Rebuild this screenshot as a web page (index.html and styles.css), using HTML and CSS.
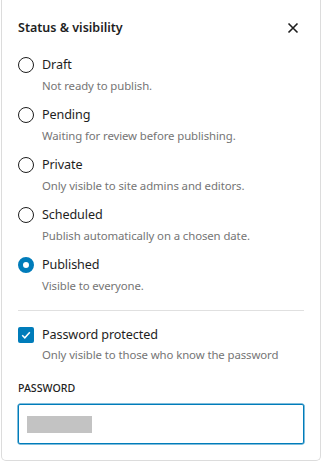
FILE: index.html
```html
<!DOCTYPE html>
<html>
<head>
<meta charset="utf-8">
<link rel="stylesheet" href="styles.css">
</head>
<body>
<div class="panel">
  <div class="header">
    <h2 class="title">Status &amp; visibility</h2>
    <button class="close" aria-label="Close">
      <svg width="12" height="12" viewBox="0 0 12 12"><path d="M1.5 1.5 L10.5 10.5 M10.5 1.5 L1.5 10.5" stroke="#1e1e1e" stroke-width="1.6" fill="none"/></svg>
    </button>
  </div>
  <div class="options">
    <div class="option">
      <div class="row"><span class="radio"></span><span class="label">Draft</span></div>
      <div class="desc">Not ready to publish.</div>
    </div>
    <div class="option">
      <div class="row"><span class="radio"></span><span class="label">Pending</span></div>
      <div class="desc">Waiting for review before publishing.</div>
    </div>
    <div class="option">
      <div class="row"><span class="radio"></span><span class="label">Private</span></div>
      <div class="desc">Only visible to site admins and editors.</div>
    </div>
    <div class="option">
      <div class="row"><span class="radio"></span><span class="label">Scheduled</span></div>
      <div class="desc">Publish automatically on a chosen date.</div>
    </div>
    <div class="option">
      <div class="row"><span class="radio checked"></span><span class="label">Published</span></div>
      <div class="desc">Visible to everyone.</div>
    </div>
  </div>
  <div class="sep"></div>
  <div class="check-opt">
    <div class="row"><span class="checkbox"><svg width="16" height="16" viewBox="0 0 16 16"><path d="M4.2 8.3 L6.8 10.8 L11.8 5.2" stroke="#fff" stroke-width="1.5" fill="none"/></svg></span><span class="label">Password protected</span></div>
    <div class="desc2">Only visible to those who know the password</div>
  </div>
  <div class="field-label">PASSWORD</div>
  <div class="input"><span class="mask"></span></div>
</div>
</body>
</html>
```
FILE: styles.css
```css
* { box-sizing: border-box; }
body {
  margin: 0;
  background: #fff;
  font-family: "Noto Sans", "Open Sans", sans-serif;
  color: #1e1e1e;
}
.panel {
  margin-left: 1px;
  width: 320px;
  border: 1px solid #dcdcdc;
  border-top: none;
  border-radius: 0 0 5px 5px;
  padding: 18px 16px 16px 16px;
  background: #fff;
}
.header {
  display: flex;
  align-items: center;
  justify-content: space-between;
  height: 20px;
}
.title {
  margin: 0;
  font-size: 12.5px;
  font-weight: 600;
  line-height: 20px;
}
.close {
  border: none;
  background: none;
  padding: 0;
  margin-right: 5px;
  width: 12px;
  height: 12px;
  display: flex;
}
.options {
  margin-top: 17px;
  display: flex;
  flex-direction: column;
  gap: 11px;
}
.row {
  display: flex;
  align-items: center;
  gap: 8px;
  height: 20px;
}
.label {
  font-size: 12.6px;
  line-height: 20px;
  letter-spacing: -0.1px;
}
.radio {
  width: 16px;
  height: 16px;
  border: 1.5px solid #1e1e1e;
  border-radius: 50%;
  flex: none;
}
.radio.checked {
  border: 5px solid #007cba;
  background: #fff;
}
.desc, .desc2 {
  margin-top: 3px;
  margin-left: 24px;
  font-size: 11.4px;
  letter-spacing: -0.1px;
  line-height: 16px;
  color: #757575;
}
.desc2 { margin-top: 2px; }
.sep {
  margin-top: 16px;
  height: 1px;
  background: #e0e0e0;
}
.check-opt {
  margin-top: 14px;
}
.checkbox {
  width: 16px;
  height: 16px;
  background: #007cba;
  border-radius: 2px;
  flex: none;
  display: flex;
}
.field-label {
  margin-top: 17px;
  font-size: 10.6px;
  line-height: 16px;
  font-weight: 500;
  text-transform: uppercase;
}
.input {
  margin-top: 8px;
  height: 40px;
  border: 1px solid #007cba;
  box-shadow: 0 0 0 0.5px #007cba;
  border-radius: 2px;
  padding: 11px 8px;
}
.mask {
  display: block;
  width: 65px;
  height: 17px;
  background: #c3c3c3;
}
```
